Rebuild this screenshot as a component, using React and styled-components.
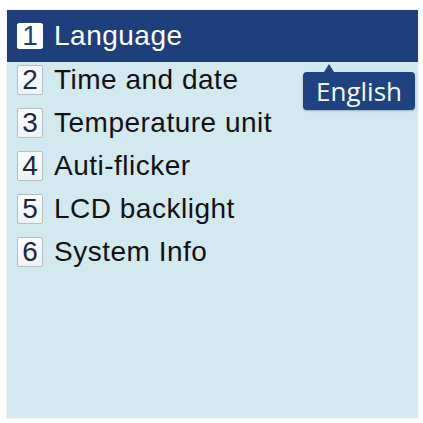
import React from "react";
import styled, { createGlobalStyle } from "styled-components";

const GlobalStyle = createGlobalStyle`
  html, body {
    margin: 0;
    padding: 0;
    background: #ffffff;
  }
  body {
    font-family: "Liberation Sans", Arial, sans-serif;
  }
`;

const Page = styled.div`
  padding: 10px 5px 5px 7px;
`;

const Panel = styled.div`
  position: relative;
  width: 411px;
  height: 408px;
  background: #d3e9f0;
  box-shadow: 0 0 2px rgba(180, 200, 210, 0.6);
  display: flex;
  flex-direction: column;
`;

const Header = styled.div`
  height: 52px;
  background: #1e3f7b;
  display: flex;
  align-items: center;
  padding-left: 10px;
  gap: 11px;
`;

const List = styled.div`
  display: flex;
  flex-direction: column;
  gap: 13px;
  padding: 3px 0 0 10px;
`;

const Row = styled.div`
  display: flex;
  align-items: center;
  height: 30px;
  gap: 11px;
`;

const NumBox = styled.span`
  box-sizing: border-box;
  width: 26px;
  height: ${(p) => (p.active ? "26px" : "30px")};
  display: flex;
  align-items: center;
  justify-content: center;
  background: ${(p) =>
    p.active ? "#ffffff" : "linear-gradient(#fbfcfd, #eef3f5)"};
  border: 1px solid ${(p) => (p.active ? "#ffffff" : "#b4c0c8")};
  border-radius: 2px;
  color: ${(p) => (p.active ? "#1e3f7b" : "#22283a")};
  font-size: 28px;
  line-height: 1;
  font-weight: 300;
`;

const Label = styled.span`
  font-size: 28px;
  line-height: 30px;
  color: ${(p) => (p.active ? "#ffffff" : "#121212")};
  letter-spacing: 0.5px;
  white-space: nowrap;
`;

const Tooltip = styled.div`
  position: absolute;
  left: 296px;
  top: 62px;
  width: 112px;
  height: 38px;
  box-sizing: border-box;
  background: #1f4381;
  border-radius: 4px;
  color: #f7f8fb;
  font-family: "Open Sans", "Noto Sans", sans-serif;
  font-size: 26px;
  display: flex;
  align-items: center;
  justify-content: center;
  box-shadow: 0 1px 2px rgba(20, 40, 80, 0.3);

  &::before {
    content: "";
    position: absolute;
    left: 21px;
    top: -8px;
    border-left: 5px solid transparent;
    border-right: 5px solid transparent;
    border-bottom: 8px solid #1f4381;
  }
`;

const items = [
  "Time and date",
  "Temperature unit",
  "Auti-flicker",
  "LCD backlight",
  "System Info",
];

export default function App() {
  return (
    <>
      <GlobalStyle />
      <Page>
        <Panel>
          <Header>
            <NumBox active>1</NumBox>
            <Label active>Language</Label>
          </Header>
          <List>
            {items.map((text, i) => (
              <Row key={text}>
                <NumBox>{i + 2}</NumBox>
                <Label>{text}</Label>
              </Row>
            ))}
          </List>
          <Tooltip>English</Tooltip>
        </Panel>
      </Page>
    </>
  );
}
